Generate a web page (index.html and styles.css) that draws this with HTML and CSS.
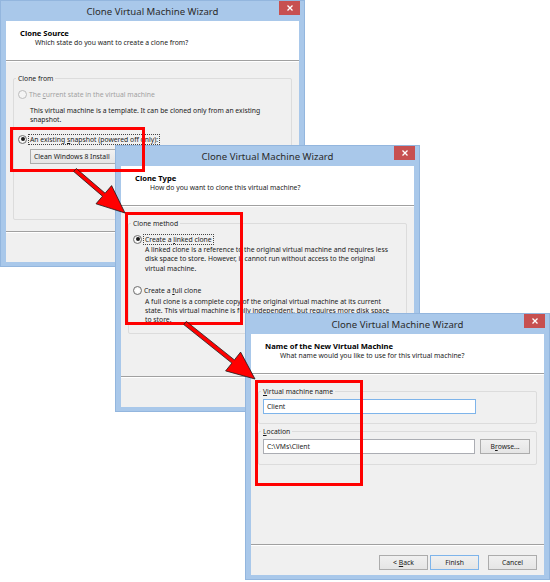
FILE: index.html
```html
<!DOCTYPE html>
<html lang="en">
<head>
    <meta charset="UTF-8">
    <title>Clone Virtual Machine Wizard</title>
    <link rel="stylesheet" href="styles.css">
</head>
<body>
<div class="desk">

    <!-- step 1: clone source (its buttons sit under step 2) -->
    <section class="wizard w-source">
        <header class="titlebar">
            <span></span>
            <span class="title">Clone Virtual Machine Wizard</span>
            <span class="close"><svg width="6" height="6" viewBox="0 0 6 6"><path d="M0.5 0.5L5.5 5.5M5.5 0.5L0.5 5.5" stroke="#fff" stroke-width="1.3"/></svg></span>
        </header>
        <div class="client">
            <div class="head">
                <h2>Clone Source</h2>
                <p>Which state do you want to create a clone from?</p>
            </div>
            <div class="body">
                <div class="group g-source">
                    <div class="group-label">Clone from</div>
                    <div class="opt disabled"><span class="radio"></span><span>The <u>c</u>urrent state in the virtual machine</span></div>
                    <p class="desc desc-far">This virtual machine is a template. It can be cloned only from an existing<br>snapshot.</p>
                    <div class="opt opt-next"><span class="radio on"></span><span class="focus">An existing <u>s</u>napshot (powered off only):</span></div>
                    <div class="combo">Clean Windows 8 Install</div>
                </div>
            </div>
            <div class="foot"></div>
        </div>
    </section>

    <!-- step 2: clone type (its buttons sit under step 3) -->
    <section class="wizard w-type">
        <header class="titlebar">
            <span></span>
            <span class="title">Clone Virtual Machine Wizard</span>
            <span class="close"><svg width="6" height="6" viewBox="0 0 6 6"><path d="M0.5 0.5L5.5 5.5M5.5 0.5L0.5 5.5" stroke="#fff" stroke-width="1.3"/></svg></span>
        </header>
        <div class="client">
            <div class="head">
                <h2>Clone Type</h2>
                <p>How do you want to clone this virtual machine?</p>
            </div>
            <div class="body">
                <div class="group g-type">
                    <div class="group-label">Clone method</div>
                    <div class="opt"><span class="radio on"></span><span class="focus">Create a <u>l</u>inked clone</span></div>
                    <p class="desc">A linked clone is a reference to the original virtual machine and requires less<br>disk space to store. However, it cannot run without access to the original<br>virtual machine.</p>
                    <div class="opt opt-far"><span class="radio"></span><span>Create a <u>f</u>ull clone</span></div>
                    <p class="desc">A full clone is a complete copy of the original virtual machine at its current<br>state. This virtual machine is fully independent, but requires more disk space<br>to store.</p>
                </div>
            </div>
            <div class="foot"></div>
        </div>
    </section>

    <!-- step 3: name -->
    <section class="wizard w-name">
        <header class="titlebar">
            <span></span>
            <span class="title">Clone Virtual Machine Wizard</span>
            <span class="close"><svg width="6" height="6" viewBox="0 0 6 6"><path d="M0.5 0.5L5.5 5.5M5.5 0.5L0.5 5.5" stroke="#fff" stroke-width="1.3"/></svg></span>
        </header>
        <div class="client">
            <div class="head">
                <h2>Name of the New Virtual Machine</h2>
                <p>What name would you like to use for this virtual machine?</p>
            </div>
            <div class="body">
                <div class="group g-name">
                    <div class="group-label"><u>V</u>irtual machine name</div>
                    <div class="field"><div class="input focused">Client</div></div>
                </div>
                <div class="group g-loc">
                    <div class="group-label"><u>L</u>ocation</div>
                    <div class="field"><div class="input">C:\VMs\Client</div><button class="btn browse">B<u>r</u>owse...</button></div>
                </div>
            </div>
            <div class="foot">
                <button class="btn">&lt; <u>B</u>ack</button>
                <button class="btn default">Finish</button>
                <button class="btn cancel">Cancel</button>
            </div>
        </div>
    </section>

    <!-- annotations -->
    <div class="mark m-source"></div>
    <div class="mark m-type"></div>
    <div class="mark m-name"></div>

    <svg class="arrows" width="550" height="582" viewBox="0 0 550 582">
        <polygon points="76.3,168.5 105.1,193.2 111.6,185.6 125,213 96,203.8 102.5,196.2 73.7,171.5"/>
        <polygon points="186.3,321.4 234.4,359.9 240.6,352.1 255,379 225.6,370.9 231.9,363.1 183.8,324.6"/>
    </svg>
</div>
</body>
</html>
```

FILE: styles.css
```css
* {
    box-sizing: border-box;
}

body {
    margin: 0;
    background-color: #fff;
    font-family: "Noto Sans", "Open Sans", sans-serif;
    font-size: 6.8px;
    color: #1a1a1a;
    overflow: hidden;
}

.desk {
    position: relative;
    width: 550px;
    height: 582px;
}

/* window frame */
.wizard {
    position: absolute;
    width: 305px;
    height: 267px;
    display: flex;
    flex-direction: column;
    background-color: #a9c8ea;
    border: 1px solid #93b6de;
    padding: 0 5px 4px;
}

.w-source { left: 0; top: 0; }
.w-type { left: 115px; top: 145px; }
.w-name { left: 245px; top: 313px; }

.titlebar {
    height: 20px;
    display: grid;
    grid-template-columns: 1fr auto 1fr;
    align-items: center;
}

.title {
    font-size: 9.6px;
    color: #2b2b2b;
}

.close {
    justify-self: end;
    align-self: start;
    width: 21px;
    height: 14px;
    margin-right: -1px;
    background-color: #c75050;
    display: flex;
    align-items: center;
    justify-content: center;
}

.client {
    flex: 1;
    display: flex;
    flex-direction: column;
    background-color: #f0f0f0;
}

.head {
    height: 40px;
    background-color: #fff;
    border-bottom: 1px solid #a0a0a0;
    padding: 6.5px 0 0 14px;
}

.head h2 {
    margin: 0;
    font-size: 7.6px;
    font-weight: bold;
    line-height: 10.5px;
    color: #000;
}

.head p {
    margin: 0 0 0 15px;
    line-height: 10px;
}

.body {
    flex: 1;
    padding: 17px 7px 0;
    box-shadow: inset 0 1px #fff;
}

/* group boxes */
.group {
    border: 1px solid #dcdcdc;
    border-radius: 2px;
    padding: 0 6px 0 4px;
}

.group-label {
    width: max-content;
    margin: -5px 0 0 -2px;
    padding: 0 2px;
    line-height: 10px;
    background-color: #f0f0f0;
}

.g-source { height: 142px; }
.g-type { height: 111px; }
.g-name { height: 33px; }
.g-loc { height: 34px; margin-top: 7px; }

.opt {
    display: flex;
    align-items: center;
    gap: 2px;
    height: 10px;
    margin-top: 5px;
    white-space: nowrap;
}

.opt-next { margin-top: 10px; }
.opt-far { margin-top: 12.5px; }

.opt.disabled {
    color: #a0a0a0;
}

.radio {
    flex: none;
    position: relative;
    width: 9px;
    height: 9px;
    border: 1px solid #707070;
    border-radius: 50%;
    background: radial-gradient(#fff 30%, #e4e4e4);
}

.disabled .radio {
    border-color: #bcbcbc;
    background: #f4f4f4;
}

.radio.on::after {
    content: "";
    position: absolute;
    inset: 1.5px;
    border-radius: 50%;
    background-color: #1a1a1a;
}

.focus {
    outline: 1px dotted #444;
    padding: 0 1px;
}

.desc {
    margin: 1.2px 0 0 12px;
    line-height: 9.3px;
    white-space: nowrap;
}

.desc-far { margin-top: 6.5px; }

.combo {
    margin: 5px 0 0 12px;
    width: 190px;
    height: 15px;
    border: 1px solid #acacac;
    background: linear-gradient(#f2f2f2, #e5e5e5);
    padding-left: 3px;
    line-height: 13px;
}

.field {
    display: flex;
    gap: 5px;
    margin-top: 2px;
}

.input {
    width: 213px;
    height: 15px;
    border: 1px solid #abadb3;
    background-color: #fff;
    padding-left: 3px;
    line-height: 13px;
}

.input.focused {
    border-color: #7eb4ea;
}

/* buttons */
.foot {
    height: 31px;
    border-top: 1px solid #a0a0a0;
    box-shadow: inset 0 1px #fff;
    display: flex;
    justify-content: flex-end;
    gap: 2px;
    padding: 10px 7px 0 0;
}

.btn {
    width: 49px;
    height: 15px;
    padding: 0;
    border: 1px solid #acacac;
    background: linear-gradient(#f0f0f0, #e5e5e5);
    font-family: inherit;
    font-size: 6.8px;
    color: #1a1a1a;
}

.btn.default {
    border-color: #7eb4ea;
}

.btn.cancel {
    margin-left: 7px;
}

.btn.browse {
    width: 50px;
}

/* red annotations */
.mark {
    position: absolute;
    border: 3px solid #f00;
}

.m-source { left: 10px; top: 127px; width: 135px; height: 45px; }
.m-type { left: 125px; top: 212px; width: 118px; height: 113px; }
.m-name { left: 255px; top: 380px; width: 108px; height: 106px; }

.arrows {
    position: absolute;
    left: 0;
    top: 0;
}

.arrows polygon {
    fill: #f00;
    stroke: #1a1a1a;
    stroke-width: 0.8;
    stroke-linejoin: miter;
}
```
